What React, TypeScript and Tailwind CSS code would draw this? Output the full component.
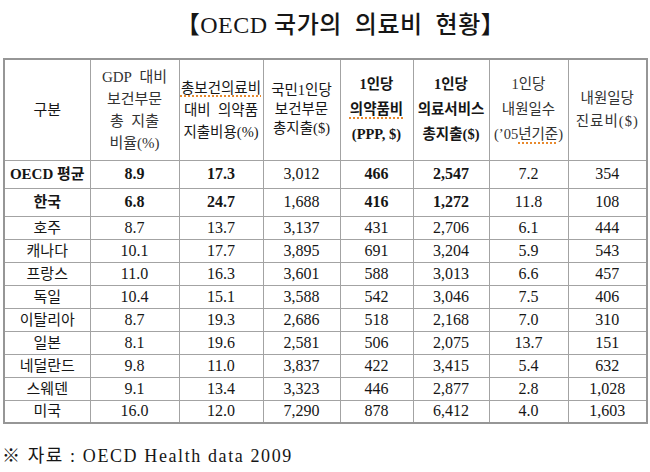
import React from 'react';

type Row = {
    name: string;
    values: string[];
    bold?: boolean;
};

const rows: Row[] = [
    { name: 'OECD 평균', values: ['8.9', '17.3', '3,012', '466', '2,547', '7.2', '354'], bold: true },
    { name: '한국', values: ['6.8', '24.7', '1,688', '416', '1,272', '11.8', '108'], bold: true },
    { name: '호주', values: ['8.7', '13.7', '3,137', '431', '2,706', '6.1', '444'] },
    { name: '캐나다', values: ['10.1', '17.7', '3,895', '691', '3,204', '5.9', '543'] },
    { name: '프랑스', values: ['11.0', '16.3', '3,601', '588', '3,013', '6.6', '457'] },
    { name: '독일', values: ['10.4', '15.1', '3,588', '542', '3,046', '7.5', '406'] },
    { name: '이탈리아', values: ['8.7', '19.3', '2,686', '518', '2,168', '7.0', '310'] },
    { name: '일본', values: ['8.1', '19.6', '2,581', '506', '2,075', '13.7', '151'] },
    { name: '네덜란드', values: ['9.8', '11.0', '3,837', '422', '3,415', '5.4', '632'] },
    { name: '스웨덴', values: ['9.1', '13.4', '3,323', '446', '2,877', '2.8', '1,028'] },
    { name: '미국', values: ['16.0', '12.0', '7,290', '878', '6,412', '4.0', '1,603'] },
];

// columns where the highlighted rows are set in bold
const boldCols = [0, 1, 3, 4];

const cell = 'border border-[#a3a3a3] text-center align-middle p-0';
const squiggle = 'underline decoration-dotted decoration-[#e8892c] decoration-[1.5px] underline-offset-[3px]';

export default function App() {
    return (
        <div className="w-[650px] h-[472px] bg-white text-[#161616] font-['Liberation_Serif','Noto_Sans_CJK_KR',serif] overflow-hidden">
            <h1 className="pt-[8px] pl-[31px] text-center text-[24px] leading-[34px] font-medium tracking-[0.5px]">
                【OECD 국가의&nbsp; 의료비&nbsp; 현황】
            </h1>

            <table className="ml-[3px] mt-[16px] w-[643px] table-fixed border-collapse border-[2.5px] border-[#969696]">
                <colgroup>
                    <col className="w-[86px]" />
                    <col className="w-[89px]" />
                    <col className="w-[84px]" />
                    <col className="w-[77px]" />
                    <col className="w-[73px]" />
                    <col className="w-[76px]" />
                    <col className="w-[79px]" />
                    <col className="w-[79px]" />
                </colgroup>
                <thead>
                    <tr className="h-[101px] text-[15px]">
                        <th className={`${cell} font-normal`}>구분</th>
                        <th className={`${cell} font-normal leading-[22px] text-[#333]`}>
                            <div>GDP&nbsp; 대비</div>
                            <div>보건부문</div>
                            <div>총&nbsp; 지출</div>
                            <div>비율(%)</div>
                        </th>
                        <th className={`${cell} font-normal leading-[22px] text-[14.5px]`}>
                            <div><span className={squiggle}>총보건의료비</span></div>
                            <div className="whitespace-pre">대비  의약품</div>
                            <div>지출비용(%)</div>
                        </th>
                        <th className={`${cell} font-normal leading-[19px] text-[14.5px]`}>
                            <div>국민1인당</div>
                            <div>보건부문</div>
                            <div>총지출($)</div>
                        </th>
                        <th className={`${cell} font-bold leading-[25px] text-[14.5px]`}>
                            <div>1인당</div>
                            <div><span className={squiggle}>의약품비</span></div>
                            <div>(PPP, $)</div>
                        </th>
                        <th className={`${cell} font-bold leading-[25px] text-[14.5px]`}>
                            <div>1인당</div>
                            <div>의료서비스</div>
                            <div>총지출($)</div>
                        </th>
                        <th className={`${cell} font-normal leading-[25px] text-[14.5px] text-[#333]`}>
                            <div>1인당</div>
                            <div>내원일수</div>
                            <div>(’05<span className={squiggle}>년기준</span>)</div>
                        </th>
                        <th className={`${cell} font-normal leading-[23px] text-[14.5px] text-[#333]`}>
                            <div>내원일당</div>
                            <div className="tracking-[1px]">진료비($)</div>
                        </th>
                    </tr>
                </thead>
                <tbody>
                    {rows.map((row) => (
                        <tr key={row.name} className={row.bold ? 'h-[28px]' : 'h-[23px]'}>
                            <td className={`${cell} text-[15px] leading-[20px] ${row.bold ? 'font-bold' : ''}`}>
                                {row.name}
                            </td>
                            {row.values.map((v, i) => (
                                <td
                                    key={i}
                                    className={`${cell} text-[16px] leading-[20px] ${row.bold && boldCols.includes(i) ? 'font-bold' : ''}`}
                                >
                                    {v}
                                </td>
                            ))}
                        </tr>
                    ))}
                </tbody>
            </table>

            <p className="mt-[20px] pl-[2px] text-[18px] leading-[24px] tracking-[1.6px] whitespace-pre">
                ※ 자료 : OECD Health data 2009
            </p>
        </div>
    );
}
